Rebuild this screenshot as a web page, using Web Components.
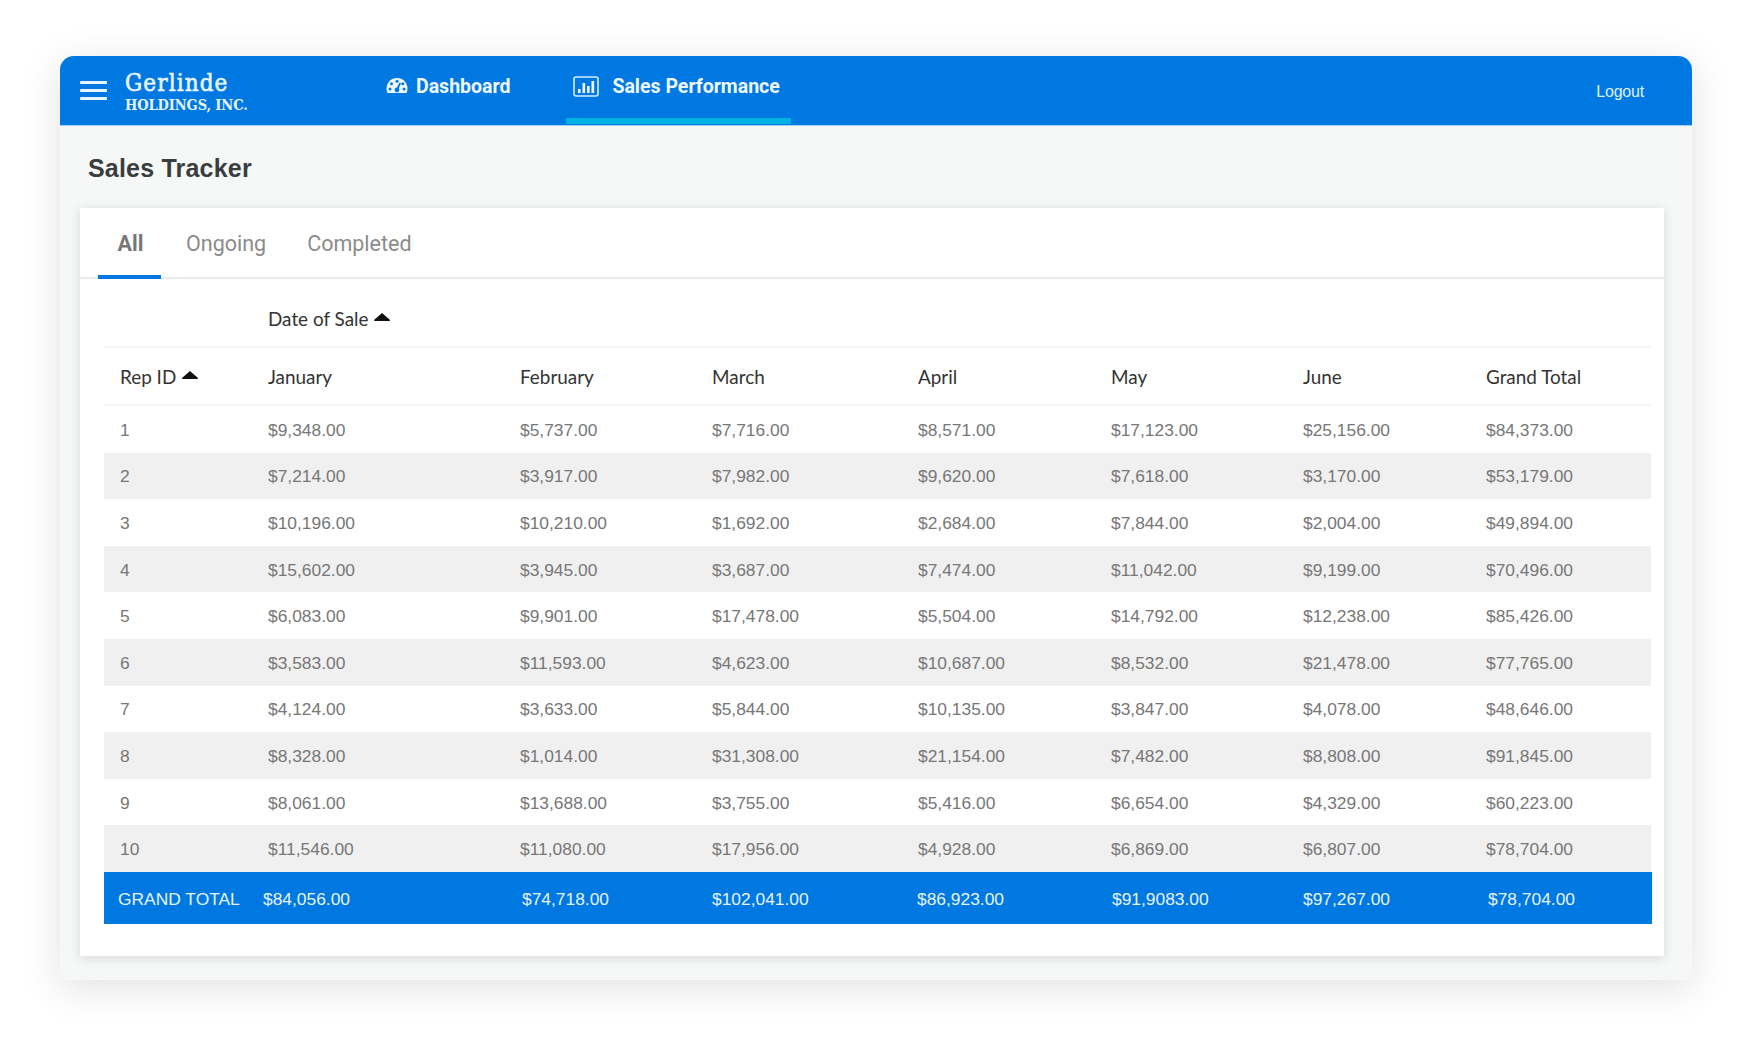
<!DOCTYPE html>
<html><head><meta charset="utf-8"><title>Sales Tracker</title>
<style>html,body{margin:0;padding:0;background:#fff}body{height:1044px;overflow:hidden}</style></head>
<body>
<sales-app></sales-app>
<template id="t-topbar">
<style>
:host{display:flex;height:69px;background:#0078e1;border-bottom:1px solid #9ed3fb;color:#fff;border-radius:14px 14px 0 0;box-sizing:content-box;align-items:stretch;font-family:"Liberation Sans",Arial,sans-serif}
.burger{width:27px;margin:25px 18px 0 20px;height:20px;display:flex;flex-direction:column;gap:5.500px}
.burger i{display:block;height:2.600px;background:#e8f5ff;border-radius:1px}
.logo{width:254px;padding-top:13px;line-height:1;color:#e6f4ff}
.logo b{display:block;font:400 24px "DejaVu Serif Condensed","DejaVu Serif",serif;letter-spacing:1.100px;-webkit-text-stroke:.6px #e6f4ff}
.logo span{display:block;font:700 14.500px "DejaVu Serif Condensed","DejaVu Serif",serif;margin-top:-1px;letter-spacing:-.1px}
nav{display:flex;flex:1}
.logout{font-size:16px;padding:27px 48px 0 0;color:#dff1ff;letter-spacing:-.2px}
</style>
<div class="burger"><i></i><i></i><i></i></div>
<div class="logo"><b>Gerlinde</b><span>HOLDINGS, INC.</span></div>
<nav><slot></slot></nav>
<div class="logout">Logout</div>
</template>
<template id="t-navlink">
<style>
:host{display:flex;align-items:flex-start;gap:8px;height:68px;box-sizing:border-box;padding:20px 13px 0 7px;font:700 19.500px "Roboto","Liberation Sans",sans-serif;color:#eef8ff;border-bottom:6px solid transparent}
:host([active]){border-bottom-color:#00b1e4;margin-left:43px;gap:13px;padding-right:11px}
svg{display:block}
span{display:block;line-height:22px}
</style>
<slot name="icon"></slot><span><slot></slot></span>
</template>
<template id="t-tabs">
<style>
:host{display:flex;height:69px;border-bottom:2px solid #e8eaeb;padding-left:18px;font:400 21.500px "Roboto","Liberation Sans",sans-serif;color:#8b8b8b}
</style>
<slot></slot>
</template>
<template id="t-tab">
<style>
:host{display:block;box-sizing:border-box;height:71px;padding:23px 0 0;margin-right:41px;line-height:26px}
:host([active]){width:63px;text-align:center;font-weight:700;color:#777;border-bottom:4px solid #0078e1;margin-right:25px;padding-left:2px}
</style>
<slot></slot>
</template>
<template id="t-row">
<style>
:host{display:grid;box-sizing:border-box;align-items:center;height:46.600px;padding:2px 0 0 16px;grid-template-columns:148px 252px 192px 206px 193px 192px 183px 1fr;font:17.400px "Liberation Sans",Arial,sans-serif;color:#777}
:host(:nth-of-type(even)){background:#f0f0f0}
</style>
<slot></slot>
</template>
<template id="t-head">
<style>
:host{display:grid;box-sizing:border-box;align-items:center;padding-left:16px;grid-template-columns:148px 252px 192px 206px 193px 192px 183px 1fr;font:18.900px "Lato","Liberation Sans",sans-serif;color:#333;border-bottom:2px solid #f4f5f5}
:host([tall]){height:69px;padding-top:12px}
:host([short]){height:58px}
</style>
<slot></slot>
</template>
<template id="t-total">
<style>
:host{display:grid;box-sizing:border-box;align-items:center;height:52px;width:1548px;padding:4px 0 0 14px;grid-template-columns:145px 259px 190px 205px 195px 191px 185px 1fr;font:17.400px "Liberation Sans",Arial,sans-serif;color:#e6f4ff;background:#0078e1}
</style>
<slot></slot>
</template>
<template id="t-app">
<style>
:host{display:block;margin:56px 60px 0;width:1632px;height:924px;background:#f6f8f8;border-radius:14px 14px 8px 8px;box-shadow:0 8px 40px rgba(0,0,0,.12)}
h1{margin:0;padding:27px 0 0 28px;height:55px;font:700 25px "Liberation Sans",Arial,sans-serif;color:#3a3d3e;letter-spacing:.2px;line-height:30px}
.card{margin:0 28px 0 20px;height:748px;background:#fff;box-shadow:0 2px 10px rgba(0,0,0,.13);box-sizing:border-box}
.body{padding:0 13px 0 24px}
.caret{display:inline-block;vertical-align:5px;margin-left:6px}
</style>
<top-bar>
  <nav-link><svg slot="icon" width="22" height="20" viewBox="0 0 22 20"><path fill="#eef8ff" d="M11 2C5 2 .5 6.700.5 12.500c0 1.700.4 3.200 1.100 4.500h18.800c.7-1.300 1.100-2.800 1.100-4.500C21.500 6.700 17 2 11 2z"/><g fill="#0078e1"><circle cx="11" cy="5.300" r="1.500"/><circle cx="5.500" cy="7.800" r="1.500"/><circle cx="4" cy="13" r="1.500"/><circle cx="18" cy="13" r="1.500"/><circle cx="16.800" cy="7.800" r="1.500"/><circle cx="11" cy="14" r="2.400"/><path d="M10 13.500 13.500 6.500l1.500.7-3 7z"/></g></svg>Dashboard</nav-link>
  <nav-link active><svg slot="icon" width="26" height="21" viewBox="0 0 26 21"><rect x="1" y="1" width="24" height="19" rx="2" fill="none" stroke="#d5ecff" stroke-width="1.600"/><g fill="#eef8ff"><rect x="5" y="13" width="2.600" height="4"/><rect x="9.500" y="7" width="2.600" height="10"/><rect x="14" y="10" width="2.600" height="7"/><rect x="18.500" y="5" width="2.600" height="12"/></g></svg>Sales Performance</nav-link>
</top-bar>
<h1>Sales Tracker</h1>
<div class="card">
<tab-bar><tab-item active>All</tab-item><tab-item>Ongoing</tab-item><tab-item>Completed</tab-item></tab-bar>
<div class="body" id="body"></div>
</div>
</template>
<script>
function shadowOf(id){return class extends HTMLElement{constructor(){super();this.attachShadow({mode:'open'}).appendChild(document.getElementById(id).content.cloneNode(true));}}}
const caret='<svg class="caret" width="16" height="8" viewBox="0 0 16 8"><path d="M8 0 16 7q.3 1-1 1H1Q-.3 8 0 7z" fill="#111"/></svg>';
customElements.define('top-bar',shadowOf('t-topbar'));
customElements.define('nav-link',shadowOf('t-navlink'));
customElements.define('tab-bar',shadowOf('t-tabs'));
customElements.define('tab-item',shadowOf('t-tab'));
customElements.define('table-row',shadowOf('t-row'));
customElements.define('table-head',shadowOf('t-head'));
customElements.define('table-total',shadowOf('t-total'));
const D=[[1,"$9,348.00","$5,737.00","$7,716.00","$8,571.00","$17,123.00","$25,156.00","$84,373.00"],
[2,"$7,214.00","$3,917.00","$7,982.00","$9,620.00","$7,618.00","$3,170.00","$53,179.00"],
[3,"$10,196.00","$10,210.00","$1,692.00","$2,684.00","$7,844.00","$2,004.00","$49,894.00"],
[4,"$15,602.00","$3,945.00","$3,687.00","$7,474.00","$11,042.00","$9,199.00","$70,496.00"],
[5,"$6,083.00","$9,901.00","$17,478.00","$5,504.00","$14,792.00","$12,238.00","$85,426.00"],
[6,"$3,583.00","$11,593.00","$4,623.00","$10,687.00","$8,532.00","$21,478.00","$77,765.00"],
[7,"$4,124.00","$3,633.00","$5,844.00","$10,135.00","$3,847.00","$4,078.00","$48,646.00"],
[8,"$8,328.00","$1,014.00","$31,308.00","$21,154.00","$7,482.00","$8,808.00","$91,845.00"],
[9,"$8,061.00","$13,688.00","$3,755.00","$5,416.00","$6,654.00","$4,329.00","$60,223.00"],
[10,"$11,546.00","$11,080.00","$17,956.00","$4,928.00","$6,869.00","$6,807.00","$78,704.00"]];
const T=["GRAND TOTAL","$84,056.00","$74,718.00","$102,041.00","$86,923.00","$91,9083.00","$97,267.00","$78,704.00"];
const cells=a=>a.map(c=>`<span>${c}</span>`).join('');
class SalesApp extends HTMLElement{constructor(){super();const s=this.attachShadow({mode:'open'});s.appendChild(document.getElementById('t-app').content.cloneNode(true));
s.getElementById('body').innerHTML=
`<table-head tall><span></span><span>Date of Sale${caret}</span></table-head>`+
`<table-head short><span>Rep ID${caret}</span><span>January</span><span>February</span><span>March</span><span>April</span><span>May</span><span>June</span><span>Grand Total</span></table-head>`+
`<div>`+D.map(r=>`<table-row>${cells(r)}</table-row>`).join('')+`</div>`+
`<table-total>${cells(T)}</table-total>`;}}
customElements.define('sales-app',SalesApp);
</script>
</body></html>
